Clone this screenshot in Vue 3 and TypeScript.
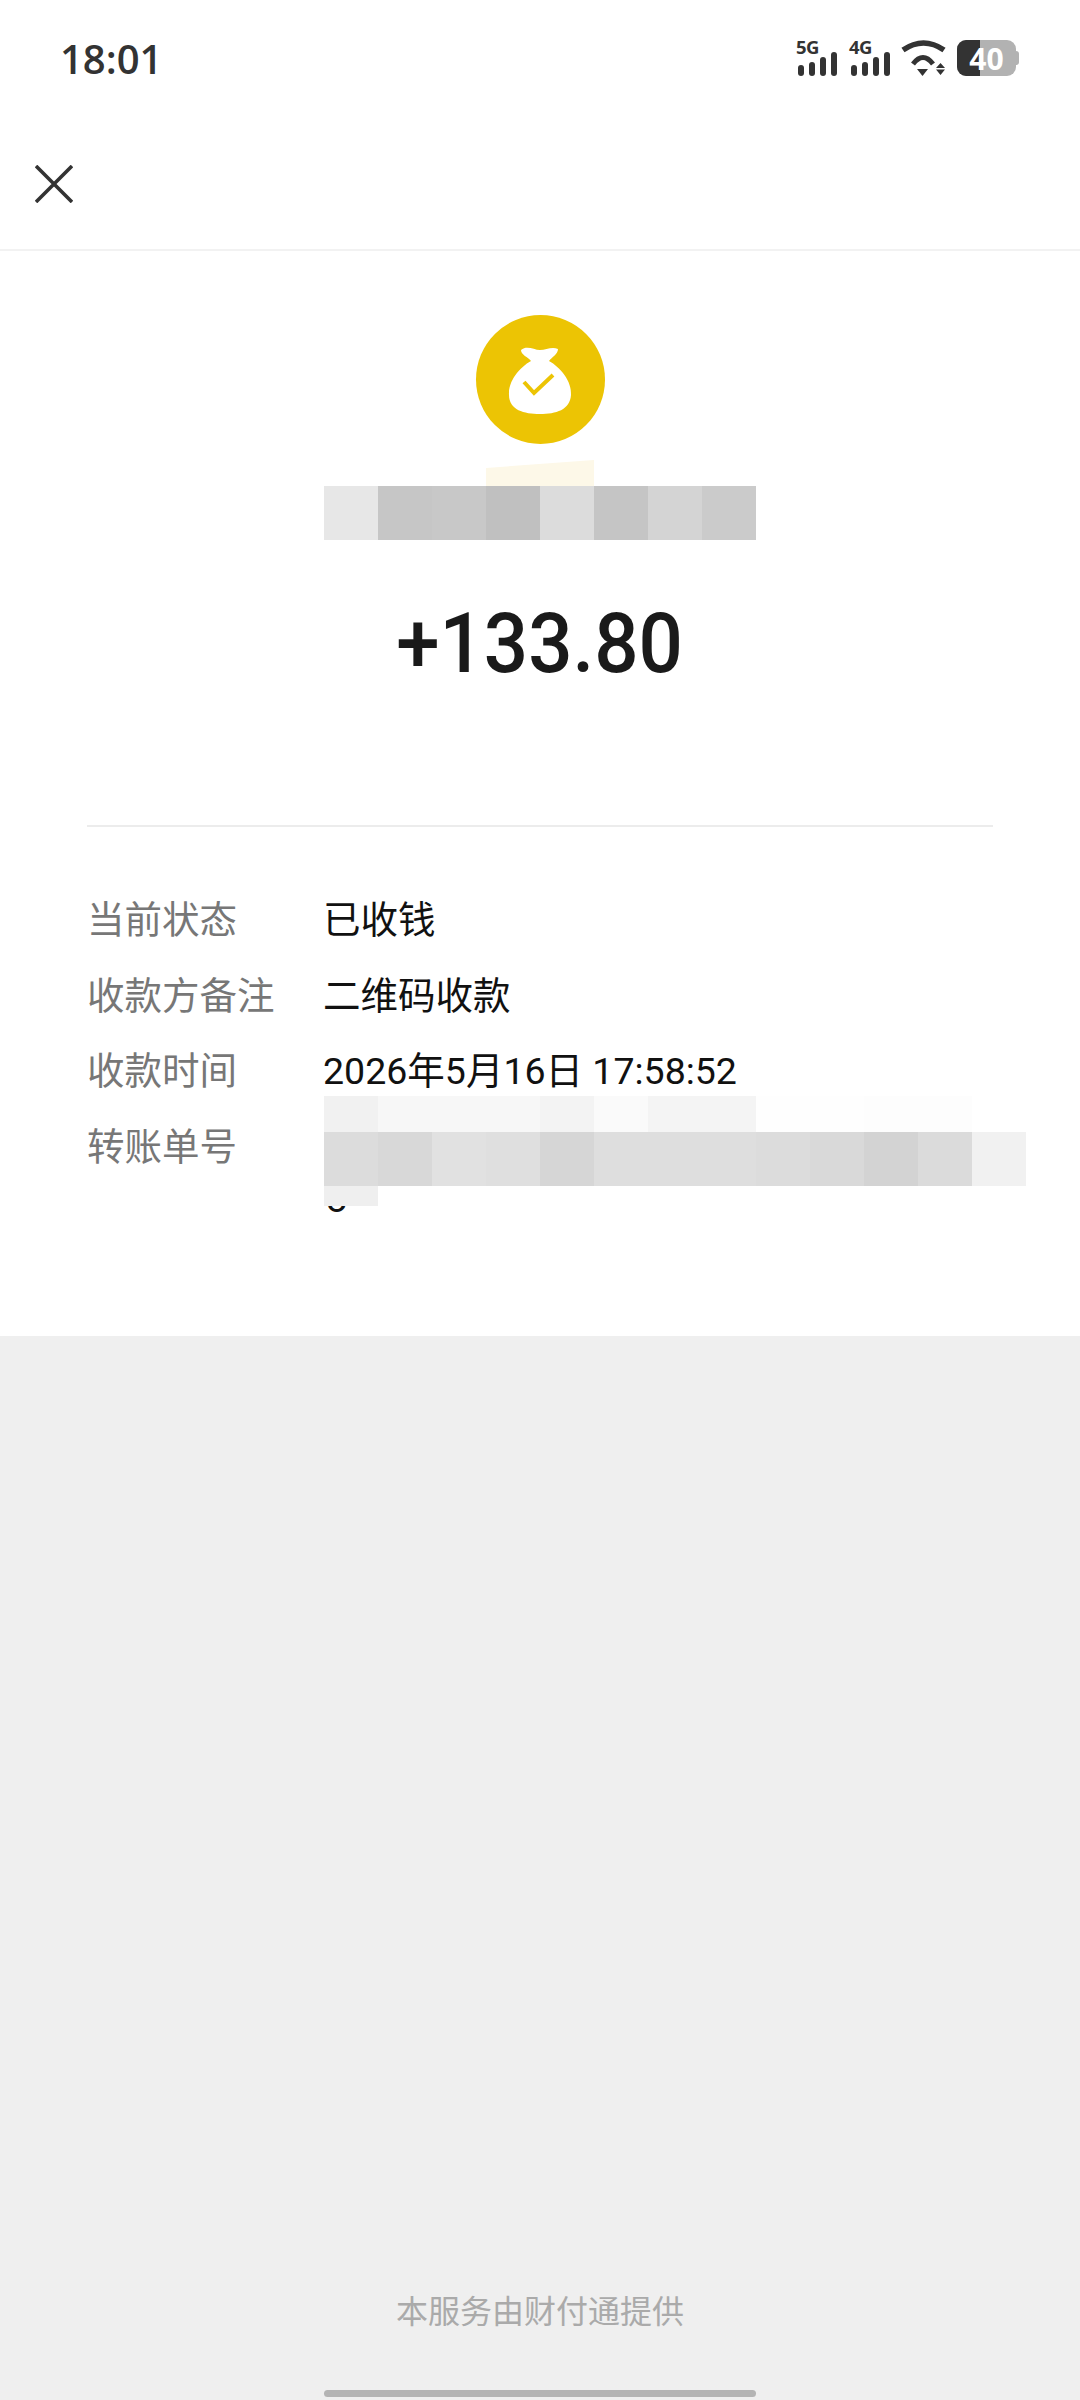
<script setup lang="ts">
const rows = [
  { label: '当前状态', value: '已收钱' },
  { label: '收款方备注', value: '二维码收款' },
  { label: '收款时间', value: '2026年5月16日 17:58:52' },
]
const nameCells = ['#e7e7e7', '#c6c6c6', '#c8c8c8', '#c0c0c0', '#dcdcdc', '#c5c5c5', '#d4d4d4', '#cbcbcb']
const orderTop = ['#f1f1f1', '#f7f7f7', '#f7f7f7', '#f7f7f7', '#f3f3f3', '#fafafa', '#f4f4f4', '#f4f4f4', '#fefefe', '#fefefe', '#fdfdfd', '#fdfdfd', '#ffffff']
const orderMid = ['#dcdcdc', '#d8d8d8', '#e1e1e1', '#dfdfdf', '#d6d6d6', '#dedede', '#dedede', '#dedede', '#dcdcdc', '#d9d9d9', '#d3d3d3', '#dbdbdb', '#f1f1f1']
const networks = ['5G', '4G']
</script>

<template>
  <div class="page">
    <div class="sheet">
      <div class="status-bar">
        <span class="clock">18:01</span>
        <div class="status-icons">
          <div v-for="n in networks" :key="n" class="signal">
            <span class="net">{{ n }}</span>
            <svg width="40" height="24" viewBox="0 0 40 24"><rect x="0" y="13" width="6" height="11" rx="3" /><rect x="11" y="10" width="6" height="14" rx="3" /><rect x="22" y="5" width="6" height="19" rx="3" /><rect x="33" y="0" width="6" height="24" rx="3" /></svg>
          </div>
          <svg class="wifi" width="46" height="36" viewBox="0 0 46 36" fill="none" stroke="#333" stroke-width="5.500">
            <path d="M3 10 Q23.500 -4 44 10" />
            <path d="M13 24 Q23 11 33 24" stroke-width="5" />
            <path d="M17 29 L28 29 L22.500 36 Z" fill="#333" stroke="none" />
            <path d="M36 28 L45 28 L40.500 23 Z M36 29.500 L45 29.500 L40.500 35 Z" fill="#333" stroke="none" />
          </svg>
          <div class="battery">
            <div class="battery-fill"></div>
            <span class="battery-num">40</span>
            <i class="battery-tip"></i>
          </div>
        </div>
      </div>

      <div class="nav">
        <svg width="38" height="38" viewBox="0 0 38 38" stroke="#333" stroke-width="3.600" fill="none"><path d="M1 1 L37 37 M37 1 L1 37" /></svg>
      </div>

      <div class="head">
        <div class="badge">
          <svg width="64" height="70" viewBox="0 0 64 70">
            <path fill="#fff" d="M13 5 C19 0 26 5 32 5 C38 5 44 1 50 4 C50 9 44 12 41 16 C52 22 64 36 63 50 C62 65 48 69 32 69 C16 69 1 65 1 50 C0 36 12 22 23 16 C20 12 13 10 13 5 Z" />
            <path fill="none" stroke="#ecc404" stroke-width="4" d="M16 37 L26 48 L45 30" />
          </svg>
        </div>
        <div class="name-wrap">
          <i class="name-ghost"></i>
          <div class="mosaic name-mosaic">
            <i v-for="(c, i) in nameCells" :key="i" :style="{ background: c }"></i>
          </div>
        </div>
        <div class="amount">+133.80</div>
      </div>

      <div class="details">
        <div v-for="r in rows" :key="r.label" class="row">
          <span class="label">{{ r.label }}</span>
          <span class="value">{{ r.value }}</span>
        </div>
        <div class="row">
          <span class="label">转账单号</span>
          <div class="order">
            <span class="order-glyph">8</span>
            <div class="mosaic order-top">
              <i v-for="(c, i) in orderTop" :key="i" :style="{ background: c }"></i>
            </div>
            <div class="mosaic order-mid">
              <i v-for="(c, i) in orderMid" :key="i" :style="{ background: c }"></i>
            </div>
            <i class="order-tail"></i>
          </div>
        </div>
      </div>
    </div>

    <div class="foot">
      <span class="provider">本服务由财付通提供</span>
      <i class="home-bar"></i>
    </div>
  </div>
</template>

<style>
html, body { margin: 0; background: #efefef; }
</style>

<style scoped>
.page { width: 1080px; height: 2400px; display: flex; flex-direction: column; background: #efefef; font-family: Roboto, "Noto Sans CJK SC", sans-serif; }
.sheet { height: 1336px; background: #fff; box-sizing: border-box; }
.status-bar { height: 116px; display: flex; justify-content: space-between; align-items: center; padding: 0 64px 0 60px; box-sizing: border-box; }
.clock { font-size: 40px; color: #333; font-family: "Open Sans", sans-serif; font-weight: 600; }
.status-icons { display: flex; align-items: flex-end; height: 36px; }
.signal { width: 53px; height: 36px; display: flex; flex-direction: column; fill: #333; }
.signal svg { margin-left: 2px; display: block; }
.net { font-size: 18.500px; line-height: 13px; height: 12px; font-weight: 700; color: #333; font-family: "Open Sans", sans-serif; letter-spacing: -0.500px; }
.wifi { margin-left: -2px; display: block; overflow: visible; }
.battery { width: 59px; height: 36px; margin-left: 11px; background: #b2b2b2; border-radius: 9px; position: relative; display: flex; align-items: center; justify-content: center; }
.battery-fill { position: absolute; left: 0; top: 0; bottom: 0; width: 23px; background: #333; border-radius: 9px 0 0 9px; }
.battery-num { position: relative; color: #fff; font-size: 30px; font-weight: 700; font-family: "Open Sans", sans-serif; }
.battery-tip { position: absolute; right: -3px; top: 11px; width: 3px; height: 14px; background: #b2b2b2; border-radius: 0 3px 3px 0; }
.nav { height: 135px; display: flex; align-items: center; padding: 2px 0 0 35px; box-sizing: border-box; border-bottom: 2px solid #f2f2f2; }
.head { display: flex; flex-direction: column; align-items: center; margin: 0 87px; height: 576px; border-bottom: 2px solid #ececec; box-sizing: border-box; padding-top: 64px; }
.badge { width: 129px; height: 129px; border-radius: 50%; background: #ecc404; display: flex; align-items: center; justify-content: center; }
.name-wrap { position: relative; margin-top: 42px; }
.name-ghost { position: absolute; left: 162px; top: -26px; width: 108px; height: 26px; background: #fdf8e8; clip-path: polygon(0 8px, 100% 0, 100% 100%, 0 100%); }
.mosaic { display: grid; grid-auto-flow: column; grid-auto-columns: 54px; }
.name-mosaic { height: 54px; }
.mosaic i { display: block; }
.amount { margin-top: 54px; font-size: 83px; line-height: 100px; font-weight: 500; color: #1a1a1a; transform: scaleX(0.94); }
.details { padding: 52px 0 0 87px; }
.row { display: flex; height: 75.500px; align-items: center; font-size: 37.500px; }
.label { width: 236px; color: #777; flex: none; }
.value { color: #111; }
.order { position: relative; height: 76px; flex: 1; }
.order-top { position: absolute; left: 1px; top: -9px; height: 36px; }
.order-mid { position: absolute; left: 1px; top: 27px; height: 54px; }
.order-tail { position: absolute; left: 1px; top: 81px; width: 54px; height: 20px; background: #efefef; }
.order-glyph { position: absolute; left: 3px; top: 72px; font-size: 38px; line-height: 44px; color: #111; }
.foot { flex: 1; display: flex; flex-direction: column; align-items: center; }
.provider { margin-top: 954px; font-size: 32px; line-height: 44px; color: #aaa; }
.home-bar { margin-top: 56px; width: 432px; height: 7px; border-radius: 4px; background: #b4b4b4; }
</style>
